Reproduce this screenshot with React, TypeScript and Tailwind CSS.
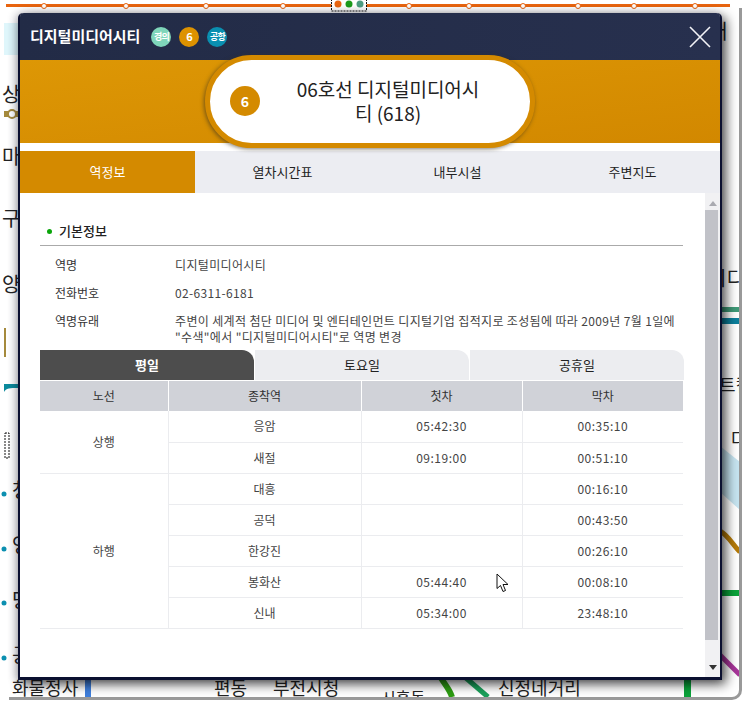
const FONT = "font-['Noto_Sans_CJK_KR','Noto_Sans',sans-serif]";

const MAP_LABELS = [
  { text: "상", className: "left-[2px] top-[84px] text-[20px]" },
  { text: "마", className: "left-[2px] top-[146px] text-[20px]" },
  { text: "구", className: "left-[2px] top-[208px] text-[20px]" },
  { text: "양", className: "left-[2px] top-[274px] text-[20px]" },
  { text: "청", className: "left-[12px] top-[480px] text-[20px]" },
  { text: "영", className: "left-[12px] top-[535px] text-[20px]" },
  { text: "당", className: "left-[12px] top-[590px] text-[20px]" },
  { text: "공", className: "left-[12px] top-[645px] text-[20px]" },
  { text: "화물정사", className: "left-[12px] top-[678px] text-[18px]" },
  { text: "편동", className: "left-[214px] top-[678px] text-[18px]" },
  { text: "부전시청", className: "left-[273px] top-[678px] text-[18px]" },
  { text: "시흥동", className: "left-[381px] top-[689px] text-[16px]" },
  { text: "신정네거리", className: "left-[498px] top-[678px] text-[18px]" },
  { text: "대", className: "left-[709px] top-[21px] text-[20px]" },
  { text: "시디", className: "left-[708px] top-[268px] text-[20px]" },
  { text: "트컵", className: "left-[719px] top-[375px] text-[18px]" },
  { text: "다", className: "left-[731px] top-[429px] text-[18px]" },
];

const TOP_DOTS = [44, 126, 206, 283, 409, 469, 523, 578, 634, 695];

const TABLE_ROWS = [
  { dir: "상행", span: 2, end: "응암", first: "05:42:30", last: "00:35:10" },
  { end: "새절", first: "09:19:00", last: "00:51:10" },
  { dir: "하행", span: 5, end: "대흥", first: "", last: "00:16:10" },
  { end: "공덕", first: "", last: "00:43:50" },
  { end: "한강진", first: "", last: "00:26:10" },
  { end: "봉화산", first: "05:44:40", last: "00:08:10" },
  { end: "신내", first: "05:34:00", last: "23:48:10" },
];

function MapBackground() {
  return (
    <div className="absolute left-0 top-0 w-[740px] h-[697px] overflow-hidden">
      <svg className="absolute inset-0" width="740" height="697">
        <rect x="6" y="4" width="724" height="3" fill="#e8640f" />
        {TOP_DOTS.map((x) => (
          <circle key={x} cx={x} cy="6" r="2.5" fill="#fff" stroke="#e8640f" />
        ))}
        <rect x="331.5" y="-2" width="35" height="13" fill="#fff" stroke="#111" strokeDasharray="2 1" />
        <circle cx="338" cy="4" r="3.5" fill="#e8640f" />
        <circle cx="349" cy="4" r="3.5" fill="#1c9a1c" />
        <circle cx="360" cy="4" r="3.5" fill="#4d9c80" />
        <rect x="4" y="23" width="14" height="32" fill="#dff6fb" />
        <rect x="4" y="111" width="14" height="6" fill="#a58a3c" />
        <circle cx="12" cy="114" r="4" fill="#fff" stroke="#a58a3c" strokeWidth="2" />
        <rect x="4" y="328" width="2" height="29" fill="#a58a3c" />
        <path d="M4 392 V384 H18 V388 C10 388 6 388 4 392Z" fill="#0b8a9c" />
        <rect x="5" y="433" width="4" height="25" fill="#fff" stroke="#111" strokeDasharray="2 1" />
        {[494, 549, 603, 658].map((y) => (
          <circle key={y} cx="4" cy={y} r="2.5" fill="#0b8fb0" />
        ))}
        <rect x="85" y="678" width="6" height="19" fill="#3f7fdc" />
        <path d="M441 678 C446 686 450 690 452 697" stroke="#2d9c12" strokeWidth="6" fill="none" />
        <path d="M466 678 L488 697" stroke="#1aa05a" strokeWidth="5" fill="none" />
        <rect x="684" y="678" width="7" height="19" fill="#0aa33a" />
        <rect x="720" y="307" width="20" height="5" fill="#3f9a78" />
        <rect x="720" y="318" width="20" height="6" fill="#0b7f9c" />
        <path d="M720 446 L740 462 V510 L720 492Z" fill="#c6e4f0" />
        <path d="M720 531 C728 535 733 545 740 552" stroke="#b57a08" strokeWidth="5" fill="none" />
        <rect x="720" y="590" width="20" height="6" fill="#0aa33a" />
        <path d="M720 655 L740 675" stroke="#a8359a" strokeWidth="5" fill="none" />
      </svg>
      {MAP_LABELS.map((label) => (
        <span key={label.text + label.className} className={`absolute whitespace-nowrap leading-none text-[#222] ${label.className}`}>
          {label.text}
        </span>
      ))}
    </div>
  );
}

function Badge({ label, color, small }: { label: string; color: string; small?: boolean }) {
  return (
    <span
      className={`flex w-5 h-5 items-center justify-center rounded-full font-bold text-white ${color} ${
        small ? "text-[9px] tracking-[-0.8px]" : "text-[11px]"
      }`}
    >
      {label}
    </span>
  );
}

function Scrollbar() {
  return (
    <div className="flex w-[15px] flex-col items-center bg-[#f1f1f3]">
      <div className="flex h-[17px] w-full items-end justify-center pb-[4px]">
        <div className="h-0 w-0 border-x-[4px] border-b-[5px] border-x-transparent border-b-[#a9aab0]" />
      </div>
      <div className="h-[430px] w-[13px] self-start bg-[#c1c2c8]" />
      <div className="flex flex-1 w-full items-end justify-center pb-[7px]">
        <div className="h-0 w-0 border-x-[4px] border-t-[5px] border-x-transparent border-t-[#333]" />
      </div>
    </div>
  );
}

function InfoRow({ label, children }: { label: string; children: React.ReactNode }) {
  return (
    <div className="grid grid-cols-[120px_1fr] text-[12px] leading-[16px] text-[#333]">
      <div>{label}</div>
      <div className="tracking-[0.35px] text-[#444]">{children}</div>
    </div>
  );
}

function Timetable() {
  const head = "h-[30px] border-l border-white bg-[#d0d2d8] font-normal text-[#333] first:border-l-0";
  const cell = "h-[31px] border-b border-l border-[#ebecef] text-center text-[#444]";
  const time = "tracking-[0.5px]";
  return (
    <table className="mt-px w-[643px] table-fixed border-collapse text-[12px]">
      <colgroup>
        <col className="w-[128px]" />
        <col className="w-[193px]" />
        <col className="w-[161px]" />
        <col className="w-[161px]" />
      </colgroup>
      <thead>
        <tr>
          <th className={head}>노선</th>
          <th className={head}>종착역</th>
          <th className={head}>첫차</th>
          <th className={head}>막차</th>
        </tr>
      </thead>
      <tbody>
        {TABLE_ROWS.map((row) => (
          <tr key={row.end}>
            {row.dir && (
              <td rowSpan={row.span} className="border-b border-[#ebecef] text-center text-[#444]">
                {row.dir}
              </td>
            )}
            <td className={cell}>{row.end}</td>
            <td className={`${cell} ${time}`}>{row.first}</td>
            <td className={`${cell} ${time}`}>{row.last}</td>
          </tr>
        ))}
      </tbody>
    </table>
  );
}

function StationModal() {
  return (
    <div className="absolute left-[18px] top-[13px] flex h-[667px] w-[704px] flex-col overflow-visible rounded-t-[5px] border-x-2 border-b-[3px] border-[#0b1030] bg-white shadow-[4px_4px_12px_rgba(0,0,0,0.7),-3px_0_8px_rgba(30,30,60,0.2)]">
      <div className="flex h-[47px] shrink-0 items-center bg-gradient-to-r from-[#222b46] to-[#27304e] pl-[10px] pr-[9px] rounded-t-[4px]">
        <span className="text-[15px] font-bold text-white">디지털미디어시티</span>
        <div className="ml-[11px] flex gap-[8px]">
          <Badge label="경의" color="bg-[#7fd6ba]" small />
          <Badge label="6" color="bg-[#dd9200]" />
          <Badge label="공항" color="bg-[#0a8fb0]" small />
        </div>
        <svg className="ml-auto" width="22" height="22" viewBox="0 0 22 22">
          <path d="M1 1 L21 21 M21 1 L1 21" stroke="#f2f3f6" strokeWidth="1.6" />
        </svg>
      </div>

      <div className="flex h-[83px] shrink-0 items-center justify-center bg-gradient-to-br from-[#dd9705] to-[#d28800]">
        <div className="relative z-10 -mt-[1px] flex h-[93px] w-[330px] shrink-0 items-center rounded-full border-[5px] border-[#d48a00] bg-white pl-[20px] shadow-[-1px_1px_4px_rgba(60,50,30,0.65)]">
          <span className="flex h-[30px] w-[30px] shrink-0 items-center justify-center rounded-full bg-[#d48a00] text-[14px] font-bold text-white">
            6
          </span>
          <div className="ml-[30px] w-[196px] break-all text-center text-[19px] leading-[24px] text-[#222]">
            06호선 디지털미디어시티 (618)
          </div>
        </div>
      </div>

      <div className="mt-[8px] flex h-[42px] shrink-0 text-[13px] text-[#222]">
        <div className="flex w-[175px] items-center justify-center bg-[#d48a00] text-white">역정보</div>
        <div className="flex w-[175px] items-center justify-center bg-[#ecedf2]">열차시간표</div>
        <div className="flex w-[175px] items-center justify-center bg-[#ecedf2]">내부시설</div>
        <div className="flex w-[175px] items-center justify-center bg-[#ecedf2]">주변지도</div>
      </div>

      <div className="flex min-h-0 flex-1">
        <div className="flex-1 pl-[20px] pr-[2px] pt-[25px]">
          <div className="flex h-[28px] w-[643px] items-start border-b border-[#aaaaaa] pl-[7px] text-[13px] font-medium leading-[25px] text-[#222]">
            <span className="mr-[7px] mt-[11px] h-[5px] w-[5px] rounded-full bg-[#0aa50a]" />
            기본정보
          </div>
          <div className="flex flex-col gap-[12px] pl-[15px] pt-[11px]">
            <InfoRow label="역명">디지털미디어시티</InfoRow>
            <InfoRow label="전화번호">02-6311-6181</InfoRow>
            <InfoRow label="역명유래">
              주변이 세계적 첨단 미디어 및 엔터테인먼트 디지털기업 집적지로 조성됨에 따라 2009년 7월 1일에
              <br />
              "수색"에서 "디지털미디어시티"로 역명 변경
            </InfoRow>
          </div>
          <div className="mt-[5px] flex h-[30px] w-[644px] gap-px text-[13px] text-[#222]">
            <div className="flex flex-1 items-center justify-center rounded-tr-[12px] bg-[#4d4d4d] font-bold text-white">평일</div>
            <div className="flex flex-1 items-center justify-center rounded-tr-[12px] bg-[#ecedf0]">토요일</div>
            <div className="flex flex-1 items-center justify-center rounded-tr-[12px] bg-[#ecedf0]">공휴일</div>
          </div>
          <Timetable />
        </div>
        <Scrollbar />
      </div>
    </div>
  );
}

export default function App() {
  return (
    <div className={`relative h-[703px] w-[746px] overflow-hidden bg-white ${FONT}`}>
      <MapBackground />
      <div className="absolute left-[9px] top-[8px] h-[692px] w-[733px] rounded-br-[10px] border-b-[3px] border-r-[3px] border-[#999999]" />
      <StationModal />
      <svg className="absolute left-[496px] top-[573px]" width="14" height="20" viewBox="0 0 14 20">
        <path d="M1 1 V15.5 L4.5 12.5 L7 18.5 L9.5 17.5 L7 11.5 L12 11.5 Z" fill="#fff" stroke="#111" strokeWidth="1" />
      </svg>
    </div>
  );
}
